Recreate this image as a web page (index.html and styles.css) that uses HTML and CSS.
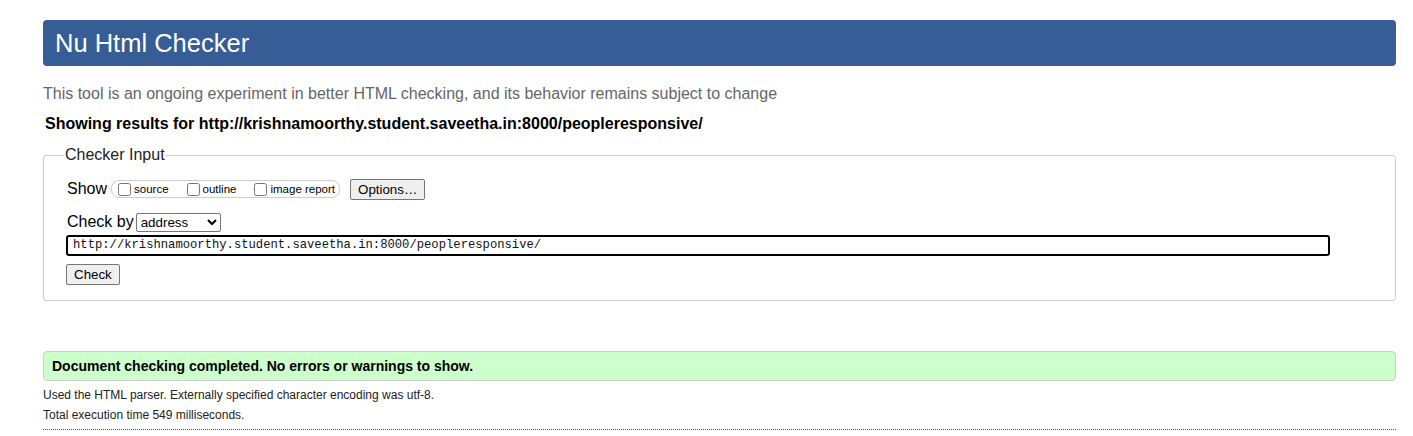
FILE: index.html
```html
<!DOCTYPE html>
<html>
<head>
<meta charset="utf-8">
<link rel="stylesheet" href="styles.css">
<title>Nu Html Checker</title>
</head>
<body>
<div class="page">
  <h1 class="banner">Nu Html Checker</h1>
  <p class="tagline">This tool is an ongoing experiment in better HTML checking, and its behavior remains subject to change</p>
  <p class="showing">Showing results for http://krishnamoorthy.student.saveetha.in:8000/peopleresponsive/</p>
  <fieldset class="checker">
    <legend>Checker Input</legend>
    <div class="row show-row">
      <span class="lbl">Show</span>
      <span class="opts">
        <label><input type="checkbox"><span>source</span></label>
        <label><input type="checkbox"><span>outline</span></label>
        <label><input type="checkbox"><span>image report</span></label>
      </span>
      <button class="btn">Options…</button>
    </div>
    <div class="row by-row">
      <span class="lbl">Check by</span>
      <select class="sel"><option>address</option></select>
    </div>
    <div class="url">http://krishnamoorthy.student.saveetha.in:8000/peopleresponsive/</div>
    <button class="btn check">Check</button>
  </fieldset>
  <div class="success">Document checking completed. No errors or warnings to show.</div>
  <p class="meta">Used the HTML parser. Externally specified character encoding was utf-8.</p>
  <p class="meta">Total execution time 549 milliseconds.</p>
  <hr class="dots">
</div>
</body>
</html>
```
FILE: styles.css
```css
html, body { margin: 0; padding: 0; background: #fff; }
body { font-family: "Liberation Sans", Arial, sans-serif; color: #000; }
.page { padding: 20px 17px 0 43px; }
.banner {
  margin: 0;
  height: 46px;
  box-sizing: border-box;
  background: #365d95;
  color: #fff;
  border-radius: 4px;
  font-weight: normal;
  font-size: 25.5px;
  line-height: 46px;
  padding-left: 12px;
}
.tagline { margin: 18px 0 0 0; font-size: 16px; color: #666; line-height: 20px; }
.showing { margin: 10px 0 0 2px; font-size: 16px; font-weight: bold; line-height: 20px; }
.checker {
  margin: 12px 0 0 0;
  border: 1px solid #ccc;
  border-radius: 3px;
  padding: 14px 22px 15px 23px;
  min-width: 0;
}
.checker legend { font-size: 16px; padding: 0 1px; margin-left: -3px; color: #222; }
.row { display: flex; align-items: center; }
.lbl { font-size: 16px; }
.show-row { height: 22px; }
.opts {
  display: inline-flex;
  align-items: center;
  margin-left: 4px;
  border: 1px solid #ccc;
  border-radius: 8px;
  height: 16px;
  padding: 0 4px 0 6px;
}
.opts label { display: inline-flex; align-items: center; font-size: 11.5px; margin-right: 18px; }
.opts label:last-child { margin-right: 0; }
.opts input { margin: 0 3px 0 0; width: 13px; height: 13px; }
.btn {
  font-family: "Liberation Sans", Arial, sans-serif;
  font-size: 13.33px;
  background: #efefef;
  border: 1px solid #767676;
  border-radius: 2px;
  padding: 1px 7px;
  height: 21px;
  color: #000;
}
.show-row .btn { margin-left: 10px; }
.by-row { margin-top: 12px; height: 20px; }
.sel {
  margin-left: 2px;
  width: 85px;
  height: 19px;
  font-family: "Liberation Sans", Arial, sans-serif;
  font-size: 13.33px;
  border: 1px solid #767676;
  border-radius: 2px;
  background: #fff;
}
.url {
  margin: 3px 43px 0 -1px;
  border: 2px solid #000;
  border-radius: 3px;
  height: 21px;
  box-sizing: border-box;
  font-family: "Liberation Mono", "Courier New", monospace;
  font-size: 12.2px;
  line-height: 17px;
  padding-left: 5px;
  color: #111;
}
.check { margin-top: 8px; margin-left: -1px; height: 21px; }
.success {
  margin-top: 50px;
  background: #ccffcc;
  border: 1px solid #ccc;
  border-radius: 4px;
  height: 30px;
  box-sizing: border-box;
  font-size: 14px;
  font-weight: bold;
  line-height: 28px;
  padding-left: 8px;
}
.meta { margin: 0; font-size: 12px; line-height: 20px; color: #222; }
.success + .meta { margin-top: 4px; }
.dots { margin: 4px 0 0 0; border: 0; border-top: 1px dotted #555; }
```
